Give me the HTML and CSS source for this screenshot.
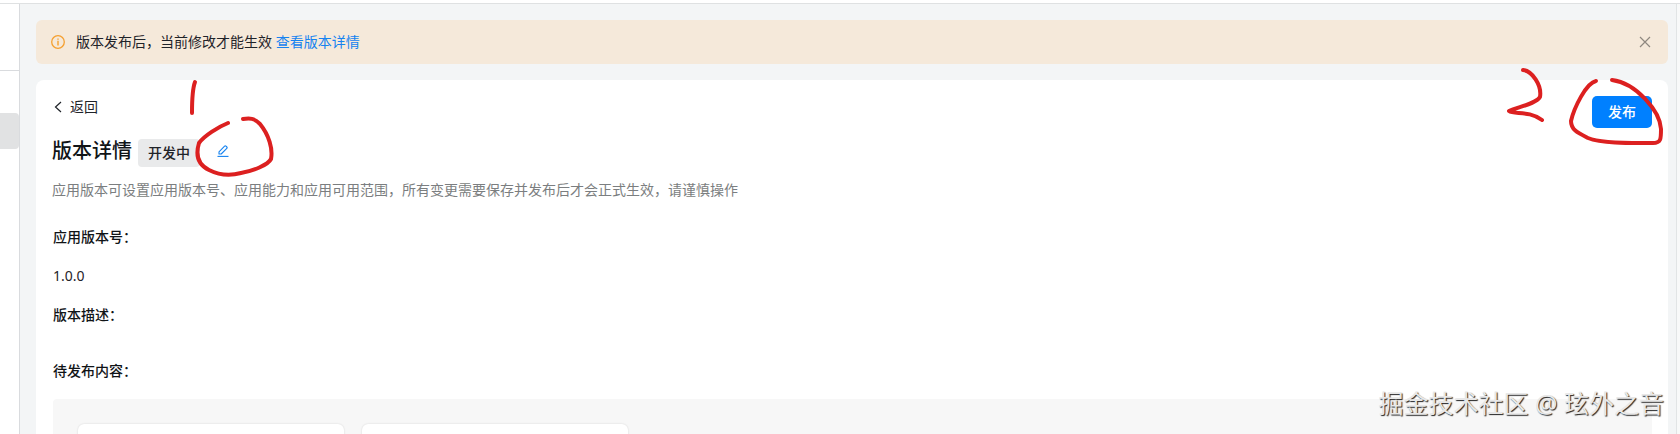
FILE: index.html
```html
<!DOCTYPE html>
<html lang="zh-CN">
<head>
    <meta charset="UTF-8">
    <title>版本详情</title>
    <link rel="stylesheet" href="styles.css">
</head>
<body>
<div class="topbar"></div>
<div class="layout">
    <aside class="sidebar">
        <div class="sidebar-head"></div>
        <div class="sidebar-item"></div>
    </aside>

    <main class="main">
        <div class="notice">
            <svg class="notice-icon" viewBox="0 0 14 14" width="14" height="14" fill="none" stroke="#f5a030">
                <circle cx="7" cy="7" r="6.3" stroke-width="1.3"/>
                <path d="M7 3.4v1.3M7 5.8v4.6" stroke-width="1.4"/>
            </svg>
            <p class="notice-text">版本发布后，当前修改才能生效 <a href="#">查看版本详情</a></p>
            <button type="button" class="notice-close" aria-label="关闭">
                <svg viewBox="0 0 12 12" width="12" height="12" fill="none" stroke="#8f8880" stroke-width="1.2">
                    <path d="M1 1l10 10M11 1L1 11"/>
                </svg>
            </button>
        </div>

        <section class="card">
            <div class="card-head">
                <a class="back" href="#">
                    <svg viewBox="0 0 12 12" width="12" height="12" fill="none" stroke="#1f2329" stroke-width="1.2">
                        <path d="M9 1L3.5 6L9 11"/>
                    </svg>
                    返回
                </a>
                <button type="button" class="publish">发布</button>
            </div>

            <div class="title-row">
                <h1>版本详情</h1>
                <span class="status">开发中</span>
                <button type="button" class="edit" aria-label="编辑">
                    <svg viewBox="0 0 12 12" width="12" height="12" fill="none" stroke="#1683f0" stroke-width="1.1" stroke-linejoin="round">
                        <path d="M2 9V6.8L7.6 1.2a1 1 0 0 1 1.4 0l.8.8a1 1 0 0 1 0 1.4L4.2 9z"/>
                        <path d="M.5 11.4h11"/>
                    </svg>
                </button>
            </div>
            <p class="desc">应用版本可设置应用版本号、应用能力和应用可用范围，所有变更需要保存并发布后才会正式生效，请谨慎操作</p>

            <dl class="info">
                <dt>应用版本号：</dt>
                <dd>1.0.0</dd>
                <dt>版本描述：</dt>
                <dd></dd>
                <dt>待发布内容：</dt>
                <dd class="panel">
                    <div class="panel-item"></div>
                    <div class="panel-item"></div>
                </dd>
            </dl>
        </section>
    </main>
    <div class="scrollbar"></div>
</div>

<!-- step marks -->
<svg class="mark mark-edit" viewBox="0 0 120 120" width="120" height="120">
    <path d="M15 12C12 20 12 30 12 43"/>
    <path d="M48 53C38 57 24 66 19 73C15 86 19 95 29 100C39 105 50 106 61 103C73 101 88 95 91 89C93 79 89 65 80 54C74 48 70 48 63 49"/>
</svg>
<svg class="mark mark-publish" viewBox="0 0 200 200" width="200" height="200">
    <path d="M43 70C52 71 62 85 60 97C56 104 37 107 29 111C34 115 49 110 62 120"/>
    <path d="M116 81C106 83 94 108 91 121C91 130 98 133 108 138C123 144 155 143 173 143C181 143 181 139 181 129C180 111 156 83 132 80"/>
</svg>
<div class="watermark">掘金技术社区 @ 玹外之音</div>
</body>
</html>
```

FILE: styles.css
```css
* {
    box-sizing: border-box;
}

body {
    display: flex;
    flex-direction: column;
    height: 100vh;
    margin: 0;
    overflow: hidden;
    background-color: #f3f5f6;
    color: #1f2329;
    font-family: "Noto Sans", "Noto Sans CJK SC", sans-serif;
    font-size: 14px;
    line-height: 22px;
}

h1, p, dl, dd {
    margin: 0;
}

a {
    color: #1683f0;
    text-decoration: none;
}

button {
    padding: 0;
    border: none;
    background: none;
    font: inherit;
    cursor: pointer;
}

svg {
    display: block;
}

.topbar {
    flex: none;
    height: 4px;
    background-color: #fff;
    border-bottom: 1px solid #dfe1e2;
}

.layout {
    display: flex;
    flex: 1;
    min-height: 0;
}

.sidebar {
    flex: none;
    width: 20px;
    background-color: #fff;
    border-right: 1px solid #d9dbde;
}

.sidebar-head {
    height: 67px;
    border-bottom: 1px solid #d9dbde;
}

.sidebar-item {
    height: 36px;
    margin-top: 42px;
    background-color: #e1e2e3;
    border-radius: 0 4px 4px 0;
}

.main {
    display: flex;
    flex: 1;
    flex-direction: column;
    gap: 16px;
    min-width: 0;
    padding: 16px 8px 0 16px;
}

.scrollbar {
    flex: none;
    width: 4px;
    background-color: #f8f9f9;
    border-left: 1px solid #e1e4e5;
}

/* notice */
.notice {
    display: flex;
    flex: none;
    align-items: center;
    height: 44px;
    padding: 0 17px 0 15px;
    background-color: #f5e9da;
    border-radius: 6px;
}

.notice-text {
    flex: 1;
    margin-left: 11px;
}

/* card */
.card {
    flex: 1 0 auto;
    padding: 16px;
    background-color: #fff;
    border-radius: 8px 8px 0 0;
}

.card-head {
    display: flex;
    align-items: flex-start;
    justify-content: space-between;
    height: 32px;
}

.back {
    display: flex;
    align-items: center;
    gap: 6px;
    color: #1f2329;
}

.publish {
    width: 60px;
    height: 32px;
    background-color: #0080ff;
    border-radius: 5px;
    color: #fff;
    font-weight: 500;
}

.title-row {
    display: flex;
    align-items: flex-start;
    height: 28px;
    margin-top: 11px;
}

.title-row h1 {
    color: #111417;
    font-size: 20px;
    font-weight: 500;
    line-height: 24px;
}

.status {
    height: 28px;
    margin-left: 6px;
    padding: 0 10px;
    background-color: #e9eaeb;
    border-radius: 4px;
    font-weight: 500;
    line-height: 28px;
}

.edit {
    margin: 6px 0 0 17px;
}

.desc {
    margin-top: 12px;
    color: #7b7e80;
}

.info {
    display: flex;
    flex-direction: column;
    gap: 17px;
    margin-top: 25px;
    padding-left: 1px;
}

.info dt {
    color: #111417;
    font-weight: 500;
}

.panel {
    display: flex;
    gap: 18px;
    padding: 25px;
    background-color: #f7f7f7;
    border-radius: 4px;
}

.panel-item {
    width: 266px;
    height: 120px;
    background-color: #fff;
    border-radius: 6px;
    box-shadow: 0 0 2px rgba(0, 0, 0, 0.15);
}

/* hand-drawn marks */
.mark {
    position: absolute;
    fill: none;
    stroke: #dc2020;
    stroke-width: 4;
    stroke-linecap: round;
    stroke-linejoin: round;
    pointer-events: none;
}

.mark-edit {
    top: 70px;
    left: 180px;
}

.mark-publish {
    top: 0;
    right: 0;
}

.watermark {
    position: absolute;
    right: 16px;
    bottom: 13px;
    color: #e8e8e8;
    font-size: 25px;
    line-height: 36px;
    text-shadow: 1px 1px 1px #222;
}
```
